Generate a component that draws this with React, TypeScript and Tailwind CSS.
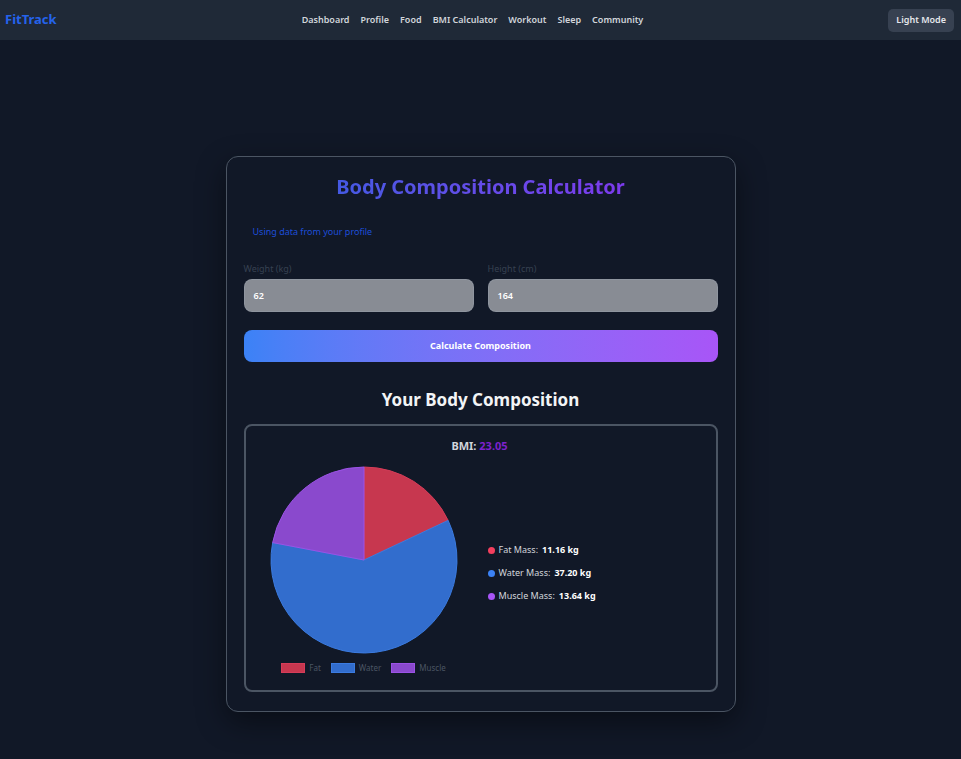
import React from 'react';

const navLinks = ['Dashboard', 'Profile', 'Food', 'BMI Calculator', 'Workout', 'Sleep', 'Community'];

const parts = [
  { label: 'Fat', name: 'Fat Mass', value: 11.16, fill: '#c7374f', stroke: '#d63c59', dot: 'bg-[#f43f5e]' },
  { label: 'Water', name: 'Water Mass', value: 37.2, fill: '#326dcd', stroke: '#3b7be0', dot: 'bg-[#3b82f6]' },
  { label: 'Muscle', name: 'Muscle Mass', value: 13.64, fill: '#8a49cd', stroke: '#9b52e6', dot: 'bg-[#a855f7]' },
];

function PieChart() {
  const cx = 104;
  const cy = 95;
  const r = 93;
  const total = parts.reduce((s, p) => s + p.value, 0);
  let start = 0;
  const slices = parts.map((p) => {
    const a0 = (start / total) * Math.PI * 2;
    start += p.value;
    const a1 = (start / total) * Math.PI * 2;
    const x0 = cx + r * Math.sin(a0);
    const y0 = cy - r * Math.cos(a0);
    const x1 = cx + r * Math.sin(a1);
    const y1 = cy - r * Math.cos(a1);
    const large = a1 - a0 > Math.PI ? 1 : 0;
    const d = `M ${cx} ${cy} L ${x0} ${y0} A ${r} ${r} 0 ${large} 1 ${x1} ${y1} Z`;
    return <path key={p.label} d={d} fill={p.fill} stroke={p.stroke} strokeWidth={1} />;
  });

  return (
    <div className="flex w-[208px] flex-col items-center">
      <svg width={208} height={190} viewBox="0 0 208 190">
        {slices}
      </svg>
      <div className="mt-[8px] flex items-center gap-[10px] text-[8px] leading-[10px] text-[#4b5563]">
        {parts.map((p) => (
          <div key={p.label} className="flex items-center gap-[4px]">
            <span
              className="h-[10px] w-[24px] border"
              style={{ backgroundColor: p.fill, borderColor: p.stroke }}
            />
            <span>{p.label}</span>
          </div>
        ))}
      </div>
    </div>
  );
}

export default function App() {
  return (
    <div className="min-h-screen bg-[#111827] font-['Noto_Sans','Open_Sans',sans-serif]">
      <nav className="flex h-[40px] items-center justify-between bg-[#1f2937] pl-[5px] pr-[7px]">
        <span className="text-[13px] font-bold text-[#2563eb]">FitTrack</span>
        <div className="flex items-center gap-[11px] text-[9px] font-semibold text-[#d1d5db]">
          {navLinks.map((l) => (
            <span key={l}>{l}</span>
          ))}
        </div>
        <button className="h-[23px] rounded-[5px] bg-[#374151] px-[8px] text-[9px] font-semibold text-[#e5e7eb]">
          Light Mode
        </button>
      </nav>

      <div className="flex justify-center pt-[116px]">
        <div className="w-[510px] rounded-xl border border-[#4b5563] bg-[#111827] px-[17px] pb-[19px] pt-4 shadow-[0_10px_30px_rgba(0,0,0,0.45)]">
          <div className="text-center">
            <h2 className="inline-block bg-gradient-to-r from-[#4459e3] to-[#7c3aed] bg-clip-text text-[20px] font-bold leading-[28px] text-transparent">
              Body Composition Calculator
            </h2>
          </div>

          <div className="mt-4 px-[9px] py-2 text-[9px] leading-[14px] text-[#1d4ed8]">
            Using data from your profile
          </div>

          <div className="mt-[15px] grid grid-cols-2 gap-[14px]">
            <div>
              <label className="block text-[9px] leading-[14px] text-[#374151]">Weight (kg)</label>
              <div className="mt-[3px] flex h-[33px] items-center rounded-lg border border-[#9ca3af]/40 bg-[#888c94] px-[9px] text-[9px] font-semibold text-white">
                62
              </div>
            </div>
            <div>
              <label className="block text-[9px] leading-[14px] text-[#374151]">Height (cm)</label>
              <div className="mt-[3px] flex h-[33px] items-center rounded-lg border border-[#9ca3af]/40 bg-[#888c94] px-[9px] text-[9px] font-semibold text-white">
                164
              </div>
            </div>
          </div>

          <button className="mt-[18px] flex h-[32px] w-full items-center justify-center rounded-lg bg-gradient-to-r from-[#3b82f6] to-[#a855f7] text-[9px] font-bold text-white">
            Calculate Composition
          </button>

          <h3 className="mt-[26px] text-center text-[17px] font-bold leading-[24px] text-[#f3f4f6]">
            Your Body Composition
          </h3>

          <div className="mt-3 rounded-lg border-2 border-[#4b5563] pb-[17px] pl-[14px] pr-4 pt-[12px]">
            <p className="text-center text-[11px] font-bold leading-[16px] text-[#d1d5db]">
              BMI: <span className="text-[#7e22ce]">23.05</span>
            </p>
            <div className="mt-[11px] flex items-center gap-5">
              <PieChart />
              <div className="flex flex-col gap-[9px] pt-[8px] text-[9px] leading-[14px]">
                {parts.map((p) => (
                  <div key={p.label} className="flex items-center gap-[4px]">
                    <span className={`h-[7px] w-[7px] rounded-full ${p.dot}`} />
                    <span className="text-[#d1d5db]">{p.name}:</span>
                    <span className="font-bold text-white">{p.value.toFixed(2)} kg</span>
                  </div>
                ))}
              </div>
            </div>
          </div>
        </div>
      </div>
    </div>
  );
}
